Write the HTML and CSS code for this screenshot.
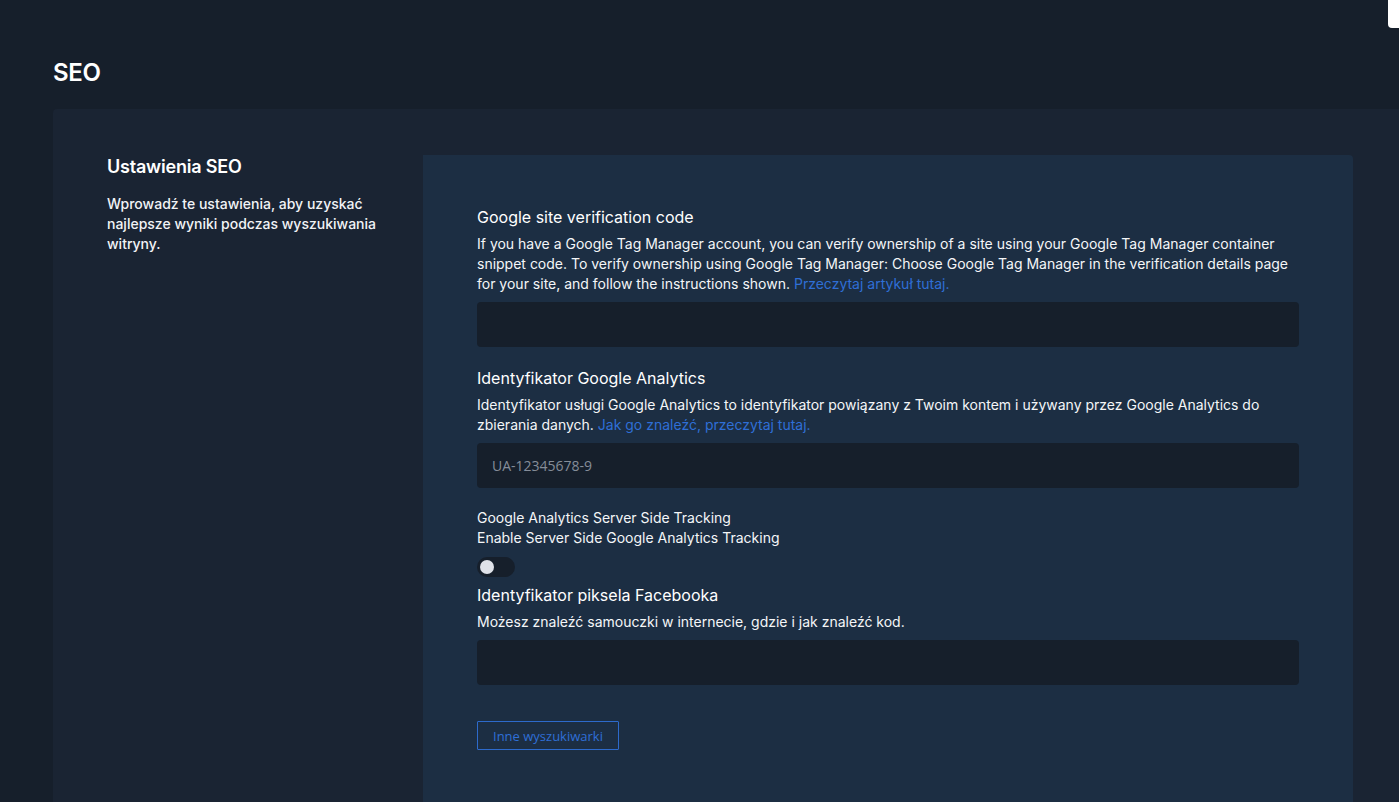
FILE: index.html
```html
<!DOCTYPE html>
<html lang="pl">
<head>
<meta charset="utf-8">
<title>SEO</title>
<link rel="stylesheet" href="styles.css">
</head>
<body>
<div class="corner-widget"></div>
<main class="page">
  <h1 class="page-title">SEO</h1>
  <section class="card">
    <aside class="intro">
      <h2 class="intro-title">Ustawienia SEO</h2>
      <p class="intro-text">Wprowadź te ustawienia, aby uzyskać najlepsze wyniki podczas wyszukiwania witryny.</p>
    </aside>
    <div class="panel">
      <div class="field">
        <label class="field-label">Google site verification code</label>
        <p class="field-desc">If you have a Google Tag Manager account, you can verify ownership of a site using your Google Tag Manager container snippet code. To verify ownership using Google Tag Manager: Choose Google Tag Manager in the verification details page for your site, and follow the instructions shown. <a href="#" class="link">Przeczytaj artykuł tutaj.</a></p>
        <input class="text-input" type="text">
      </div>
      <div class="field">
        <label class="field-label">Identyfikator Google Analytics</label>
        <p class="field-desc">Identyfikator usługi Google Analytics to identyfikator powiązany z Twoim kontem i używany przez Google Analytics do zbierania danych. <a href="#" class="link">Jak go znaleźć, przeczytaj tutaj.</a></p>
        <input class="text-input" type="text" placeholder="UA-12345678-9">
      </div>
      <div class="toggle-field">
        <p class="toggle-text">Google Analytics Server Side Tracking<br>Enable Server Side Google Analytics Tracking</p>
        <span class="toggle"><span class="toggle-knob"></span></span>
      </div>
      <div class="field field-tight">
        <label class="field-label">Identyfikator piksela Facebooka</label>
        <p class="field-desc">Możesz znaleźć samouczki w internecie, gdzie i jak znaleźć kod.</p>
        <input class="text-input" type="text">
      </div>
      <button class="outline-btn" type="button">Inne wyszukiwarki</button>
    </div>
  </section>
</main>
</body>
</html>
```
FILE: styles.css
```css
* { box-sizing: border-box; }

html, body {
  margin: 0;
  padding: 0;
  height: 100%;
  overflow: hidden;
}

body {
  background: #161f2b;
  color: #f4f6f8;
  font-family: Inter, "Noto Sans", sans-serif;
  position: relative;
}

.corner-widget {
  position: absolute;
  top: 0;
  right: 0;
  width: 11px;
  height: 28px;
  background: #ffffff;
  border-bottom-left-radius: 4px;
}

.page {
  padding: 57px 0 0 53px;
}

.page-title {
  margin: 0 0 20px;
  font-size: 24px;
  line-height: 32px;
  font-weight: 600;
  color: #ffffff;
  letter-spacing: -0.3px;
}

.card {
  display: flex;
  background: #1a2433;
  border-top-left-radius: 4px;
  padding: 46px 46px 0 0;
  height: 693px;
}

.intro {
  width: 370px;
  flex: none;
  padding: 0 40px 0 54px;
}

.intro-title {
  margin: 0;
  font-size: 18px;
  line-height: 24px;
  font-weight: 600;
  color: #ffffff;
  letter-spacing: -0.2px;
}

.intro-text {
  margin: 15px 0 0;
  font-size: 14px;
  line-height: 20px;
  font-weight: 500;
  color: #f1f3f6;
}

.panel {
  width: 930px;
  flex: none;
  background: #1c2e43;
  border-top-right-radius: 4px;
  padding: 50px 54px 0;
}

.field {
  display: flex;
  flex-direction: column;
  margin-bottom: 19px;
}

.field-tight { margin-bottom: 36px; }

.field-label {
  font-size: 16px;
  line-height: 24px;
  font-weight: 400;
  color: #ffffff;
}

.field-desc {
  margin: 5px 0 8px;
  font-size: 14px;
  line-height: 20px;
  font-weight: 400;
  color: #f4f6f8;
}

.link {
  color: #2f6fd6;
  text-decoration: none;
}

.text-input {
  height: 45px;
  width: 100%;
  background: #161f2b;
  border: none;
  border-radius: 4px;
  padding: 0 15px;
  font-family: "Open Sans", "Noto Sans", sans-serif;
  font-size: 14px;
  color: #e6e9ee;
  outline: none;
}

.text-input::placeholder { color: #858d99; }

.toggle-field {
  padding-top: 1px;
  margin-bottom: 6px;
}

.toggle-text {
  margin: 0 0 9px;
  font-size: 14px;
  line-height: 20px;
  font-weight: 400;
  color: #f4f6f8;
}

.toggle {
  display: flex;
  align-items: center;
  width: 38px;
  height: 20px;
  border-radius: 10px;
  background: #161f2b;
  padding: 0 3px;
}

.toggle-knob {
  width: 14px;
  height: 14px;
  border-radius: 50%;
  background: #dfe2e9;
}

.outline-btn {
  display: inline-block;
  height: 29px;
  padding: 0 15px;
  background: transparent;
  border: 1px solid #2d6acb;
  border-radius: 1px;
  color: #2f6fd6;
  font-family: "Open Sans", "Noto Sans", sans-serif;
  font-size: 13px;
  cursor: pointer;
}
```
